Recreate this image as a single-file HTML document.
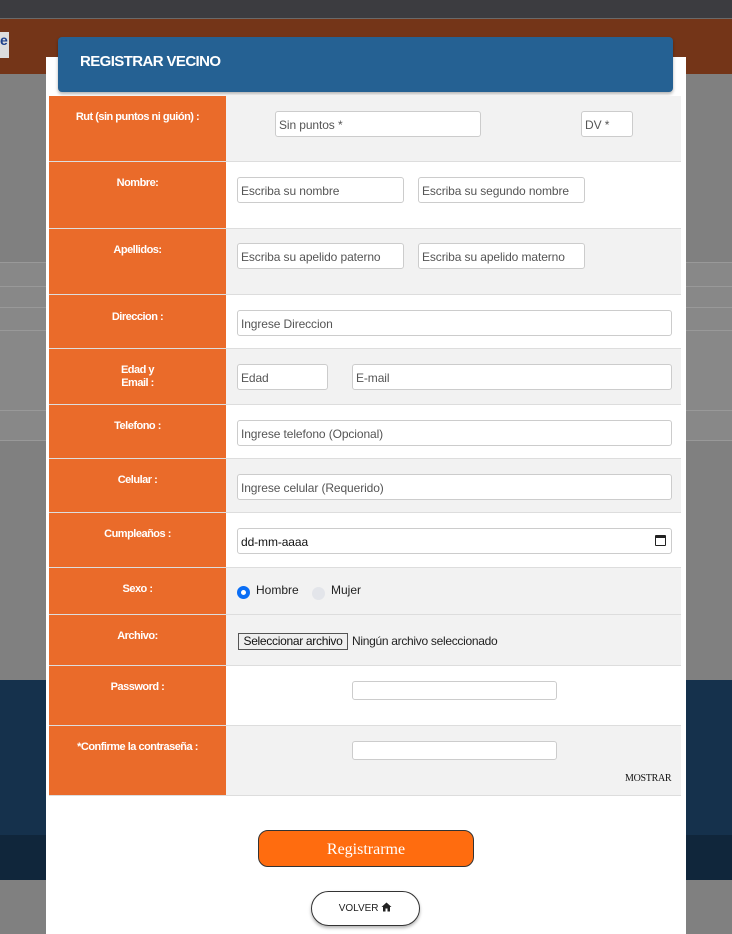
<!DOCTYPE html>
<html><head><meta charset="utf-8"><style>
*{box-sizing:border-box;margin:0;padding:0}
body{width:732px;height:934px;overflow:hidden;background:#808080;font-family:"Liberation Sans",sans-serif;position:relative}
.a{position:absolute}
.lbl{position:absolute;left:49px;width:177px;background:#ea6b2a;color:#fff;font-size:11px;font-weight:bold;text-align:center;letter-spacing:-0.5px;border-bottom:1px solid #ddd}
.cell{position:absolute;left:226px;width:455px;border-bottom:1px solid #ddd}
.in{position:absolute;height:26px;border:1px solid #ccc;border-radius:3px;background:#fff;font-size:12px;color:#555;padding:6px 3px;white-space:nowrap;overflow:hidden;letter-spacing:-0.1px}
</style></head><body>
<div class="a" style="left:0;top:0;width:732px;height:18px;background:#3c3c40"></div>
<div class="a" style="left:0;top:18px;width:732px;height:1px;background:#6a6a6a"></div>
<div class="a" style="left:0;top:19px;width:732px;height:55px;background:#743518"></div>
<div class="a" style="left:0;top:32px;width:9px;height:26px;background:#ddd;color:#1c3f8a;font-weight:bold;font-size:14px;overflow:hidden">e</div>
<div class="a" style="left:0;top:262px;width:732px;height:178px;background:#888"></div>
<div class="a" style="left:0;top:262px;width:732px;height:1px;background:#999"></div>
<div class="a" style="left:0;top:286px;width:732px;height:1px;background:#999"></div>
<div class="a" style="left:0;top:307px;width:732px;height:1px;background:#999"></div>
<div class="a" style="left:0;top:330px;width:732px;height:1px;background:#999"></div>
<div class="a" style="left:0;top:410px;width:732px;height:1px;background:#999"></div>
<div class="a" style="left:0;top:440px;width:732px;height:1px;background:#999"></div>
<div class="a" style="left:0;top:680px;width:732px;height:155px;background:#15314c"></div>
<div class="a" style="left:0;top:835px;width:732px;height:45px;background:#10263b"></div>

<div class="a" style="left:46px;top:57px;width:640px;height:877px;background:#fff"></div>
<div class="a" style="left:58px;top:37px;width:615px;height:55px;background:#256193;border-radius:4px;box-shadow:0 2px 3px rgba(0,0,0,.3);color:#fff;font-size:15px;font-weight:bold;padding:16px 22px;letter-spacing:-0.6px">REGISTRAR VECINO</div>

<div class="a" style="left:49px;top:96px;width:632px;height:700px;border:1px solid #ddd;border-top:none"></div>

<div class="lbl" style="top:96px;height:66px;padding-top:15px">Rut (sin puntos ni guión) :</div>
<div class="cell" style="top:96px;height:66px;background:#f2f2f2"></div>
<div class="in" style="left:275px;top:111px;width:206px">Sin puntos *</div>
<div class="in" style="left:581px;top:111px;width:52px">DV *</div>

<div class="lbl" style="top:162px;height:67px;padding-top:15px">Nombre:</div>
<div class="cell" style="top:162px;height:67px;background:#fff"></div>
<div class="in" style="left:237px;top:177px;width:167px">Escriba su nombre</div>
<div class="in" style="left:418px;top:177px;width:167px">Escriba su segundo nombre</div>

<div class="lbl" style="top:229px;height:66px;padding-top:15px">Apellidos:</div>
<div class="cell" style="top:229px;height:66px;background:#f2f2f2"></div>
<div class="in" style="left:237px;top:243px;width:167px">Escriba su apelido paterno</div>
<div class="in" style="left:418px;top:243px;width:167px">Escriba su apelido materno</div>

<div class="lbl" style="top:295px;height:54px;padding-top:16px">Direccion :</div>
<div class="cell" style="top:295px;height:54px;background:#fff"></div>
<div class="in" style="left:237px;top:310px;width:435px">Ingrese Direccion</div>

<div class="lbl" style="top:349px;height:56px;padding-top:15px;line-height:13px">Edad y<br>Email :</div>
<div class="cell" style="top:349px;height:56px;background:#f2f2f2"></div>
<div class="in" style="left:237px;top:364px;width:91px">Edad</div>
<div class="in" style="left:352px;top:364px;width:320px">E-mail</div>

<div class="lbl" style="top:405px;height:54px;padding-top:15px">Telefono :</div>
<div class="cell" style="top:405px;height:54px;background:#fff"></div>
<div class="in" style="left:237px;top:420px;width:435px">Ingrese telefono (Opcional)</div>

<div class="lbl" style="top:459px;height:54px;padding-top:15px">Celular :</div>
<div class="cell" style="top:459px;height:54px;background:#f2f2f2"></div>
<div class="in" style="left:237px;top:474px;width:435px">Ingrese celular (Requerido)</div>

<div class="lbl" style="top:513px;height:55px;padding-top:15px">Cumpleaños :</div>
<div class="cell" style="top:513px;height:55px;background:#fff"></div>
<div class="in" style="left:237px;top:528px;width:435px;color:#111">dd-mm-aaaa<span style="position:absolute;right:5px;top:6px;width:11px;height:11px;border:1.5px solid #222;border-top-width:3px;border-radius:1px"></span></div>

<div class="lbl" style="top:568px;height:47px;padding-top:15px">Sexo :</div>
<div class="cell" style="top:568px;height:47px;background:#f2f2f2"></div>
<div class="a" style="left:237px;top:586px;width:13px;height:13px;border-radius:50%;border:4px solid #0a6ef5;background:#fff"></div>
<div class="a" style="left:256px;top:583px;font-size:12px;color:#222">Hombre</div>
<div class="a" style="left:312px;top:587px;width:13px;height:13px;border-radius:50%;background:#e3e5ea"></div>
<div class="a" style="left:331px;top:583px;font-size:12px;color:#222">Mujer</div>

<div class="lbl" style="top:615px;height:51px;padding-top:15px">Archivo:</div>
<div class="cell" style="top:615px;height:51px;background:#f2f2f2"></div>
<div class="a" style="left:238px;top:633px;width:110px;height:17px;border:1px solid #555;background:#efefef;font-size:12px;color:#111;text-align:center;line-height:15px;letter-spacing:-0.3px">Seleccionar archivo</div>
<div class="a" style="left:352px;top:634px;font-size:12px;color:#222;letter-spacing:-0.3px">Ningún archivo seleccionado</div>

<div class="lbl" style="top:666px;height:60px;padding-top:15px">Password :</div>
<div class="cell" style="top:666px;height:60px;background:#fff"></div>
<div class="in" style="left:352px;top:681px;width:205px;height:19px"></div>

<div class="lbl" style="top:726px;height:70px;padding-top:15px">*Confirme la contraseña :</div>
<div class="cell" style="top:726px;height:70px;background:#f2f2f2"></div>
<div class="in" style="left:352px;top:741px;width:205px;height:19px"></div>
<div class="a" style="left:625px;top:773px;font-size:10px;font-family:'Liberation Serif',serif;color:#111;letter-spacing:-0.3px">MOSTRAR</div>

<div class="a" style="left:258px;top:830px;width:216px;height:37px;background:#ff6c0f;border:1px solid #333;border-radius:10px;color:#fff;font-family:'Liberation Serif',serif;font-size:16px;text-align:center;line-height:37px">Registrarme</div>
<div class="a" style="left:311px;top:891px;width:109px;height:35px;background:#fff;border:1px solid #333;border-radius:18px;box-shadow:0 2px 3px rgba(0,0,0,.3);font-size:10px;color:#222;text-align:center;line-height:33px">VOLVER <svg width="11" height="10" viewBox="0 0 11 10" style="vertical-align:-1px"><path d="M5.5 0.5L0.5 5h1.5v4.5h2.5V6.5h2v3h2.5V5h1.5z" fill="#222"/></svg></div>
</body></html>
